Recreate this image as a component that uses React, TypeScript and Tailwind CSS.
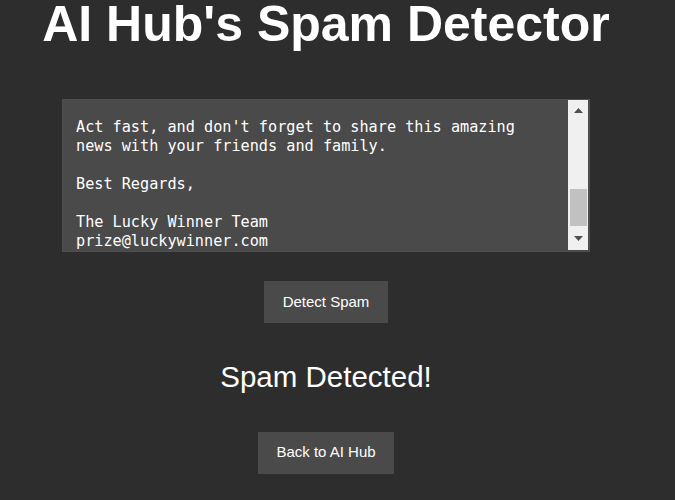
import React from "react";

// Only the lines the textarea shows at its current scroll position
const emailLines = [
  "",
  "Act fast, and don't forget to share this amazing",
  "news with your friends and family.",
  "",
  "Best Regards,",
  "",
  "The Lucky Winner Team",
  "prize@luckywinner.com",
];

const Scrollbar = () => (
  <div className="flex flex-col items-center w-[20px] mr-[1px] mb-[1px] bg-[#f0f0f0]">
    <svg width="9" height="5" viewBox="0 0 9 5" className="mt-[8px]">
      <polygon points="4.5,0 9,5 0,5" fill="#505050" />
    </svg>
    <div className="mt-[76px] w-[17px] h-[37px] bg-[#c1c1c1]" />
    <svg width="9" height="5" viewBox="0 0 9 5" className="mt-[10px]">
      <polygon points="0,0 9,0 4.5,5" fill="#505050" />
    </svg>
  </div>
);

export default function App() {
  return (
    <div className="min-h-[500px] w-full bg-[#2d2d2d] font-['Liberation_Sans',Arial,sans-serif] text-white">
      <div className="flex flex-col items-center w-[652px]">
        <h1 className="text-[50px] font-bold leading-[48px]">AI Hub's Spam Detector</h1>

        <div className="flex mt-[51px] w-[528px] h-[153px] border border-[#4f4f4f] bg-[#4a4a4a]">
          <div className="flex-1 flex flex-col justify-end overflow-hidden pl-[13px] font-['DejaVu_Sans_Mono',monospace] text-[15.2px] leading-[19px] whitespace-pre">
            {emailLines.map((line, i) => (
              <div key={i}>{line || " "}</div>
            ))}
          </div>
          <Scrollbar />
        </div>

        <button className="mt-[29px] w-[124px] h-[42px] bg-[#4a4a4a] text-[15px]">
          Detect Spam
        </button>

        <h2 className="mt-[39px] text-[29.5px] leading-none">Spam Detected!</h2>

        <button className="mt-[40px] w-[136px] h-[42px] bg-[#4a4a4a] text-[15px]">
          Back to AI Hub
        </button>
      </div>
    </div>
  );
}
